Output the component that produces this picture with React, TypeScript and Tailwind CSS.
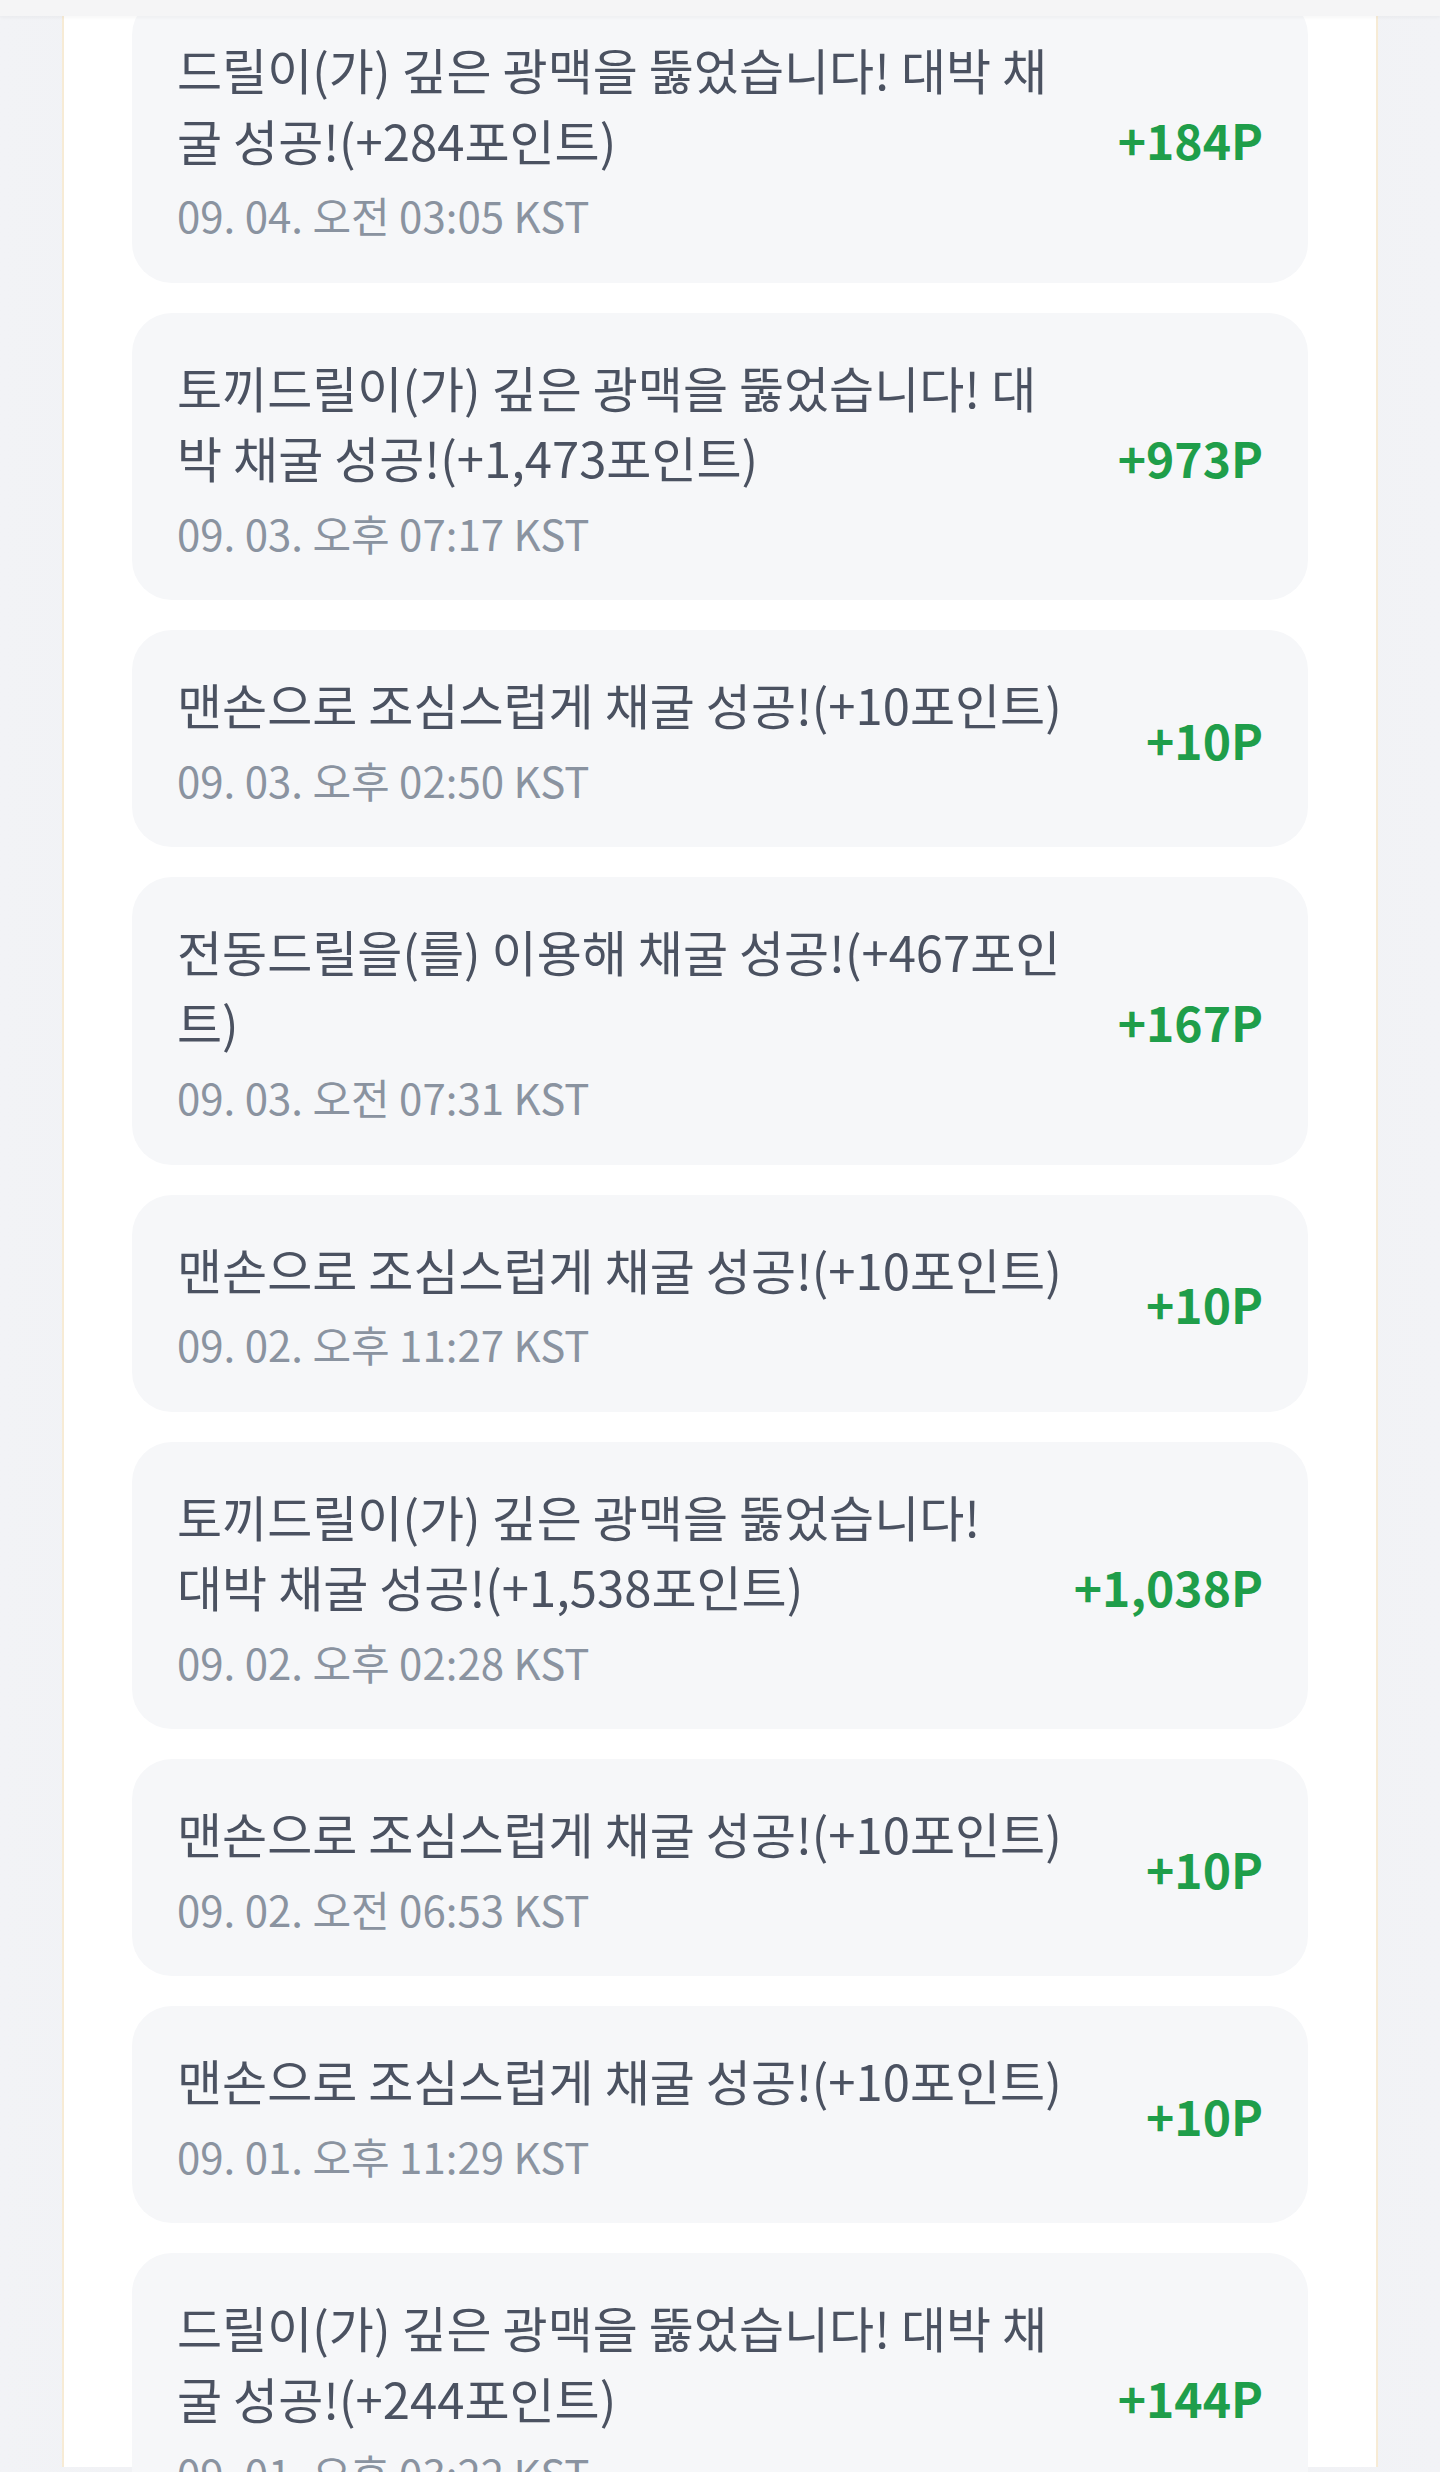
const items = [
  { title: "드릴이(가) 깊은 광맥을 뚫었습니다! 대박 채굴 성공!(+284포인트)", date: "09. 04. 오전 03:05 KST", points: "+184P" },
  { title: "토끼드릴이(가) 깊은 광맥을 뚫었습니다! 대박 채굴 성공!(+1,473포인트)", date: "09. 03. 오후 07:17 KST", points: "+973P" },
  { title: "맨손으로 조심스럽게 채굴 성공!(+10포인트)", date: "09. 03. 오후 02:50 KST", points: "+10P" },
  { title: "전동드릴을(를) 이용해 채굴 성공!(+467포인트)", date: "09. 03. 오전 07:31 KST", points: "+167P" },
  { title: "맨손으로 조심스럽게 채굴 성공!(+10포인트)", date: "09. 02. 오후 11:27 KST", points: "+10P" },
  { title: "토끼드릴이(가) 깊은 광맥을 뚫었습니다! 대박 채굴 성공!(+1,538포인트)", date: "09. 02. 오후 02:28 KST", points: "+1,038P" },
  { title: "맨손으로 조심스럽게 채굴 성공!(+10포인트)", date: "09. 02. 오전 06:53 KST", points: "+10P" },
  { title: "맨손으로 조심스럽게 채굴 성공!(+10포인트)", date: "09. 01. 오후 11:29 KST", points: "+10P" },
  { title: "드릴이(가) 깊은 광맥을 뚫었습니다! 대박 채굴 성공!(+244포인트)", date: "09. 01. 오후 03:22 KST", points: "+144P" },
];

const HistoryCard = ({ title, date, points }: { title: string; date: string; points: string }) => {
  return (
    <div className="flex items-center gap-[48px] rounded-[40px] bg-[#f6f7f9] px-[45px] pt-[39px] pb-[38.5px]">
      <div className="min-w-0 flex-1">
        <p className="text-[49px] leading-[70.5px] text-[#4b5261]">{title}</p>
        <p className="mt-[11px] text-[42px] leading-[58px] text-[#8a93a0]">{date}</p>
      </div>
      <div className="shrink-0 text-[48px] font-bold leading-none text-[#1f9e4a]">{points}</div>
    </div>
  );
};

export default function App() {
  return (
    <div className="relative h-[2472px] overflow-hidden bg-gradient-to-r from-[#f2f3f6] via-[#eceef2] to-[#f2f3f6] font-['Noto_Sans_CJK_KR','Noto_Sans',sans-serif]">
      {/* sticky top bar */}
      <div className="absolute inset-x-0 top-0 z-10 h-[16px] bg-[#f5f5f6] shadow-[0_2px_3px_rgba(0,0,0,0.03)]" />

      <div className="mx-[62px] h-full border-x-2 border-[#f7ebd5] bg-white px-[68px]">
        <div className="-mt-[5px] flex flex-col gap-[30px]">
          {items.map((item, i) => (
            <HistoryCard key={i} {...item} />
          ))}
        </div>
      </div>
    </div>
  );
}
